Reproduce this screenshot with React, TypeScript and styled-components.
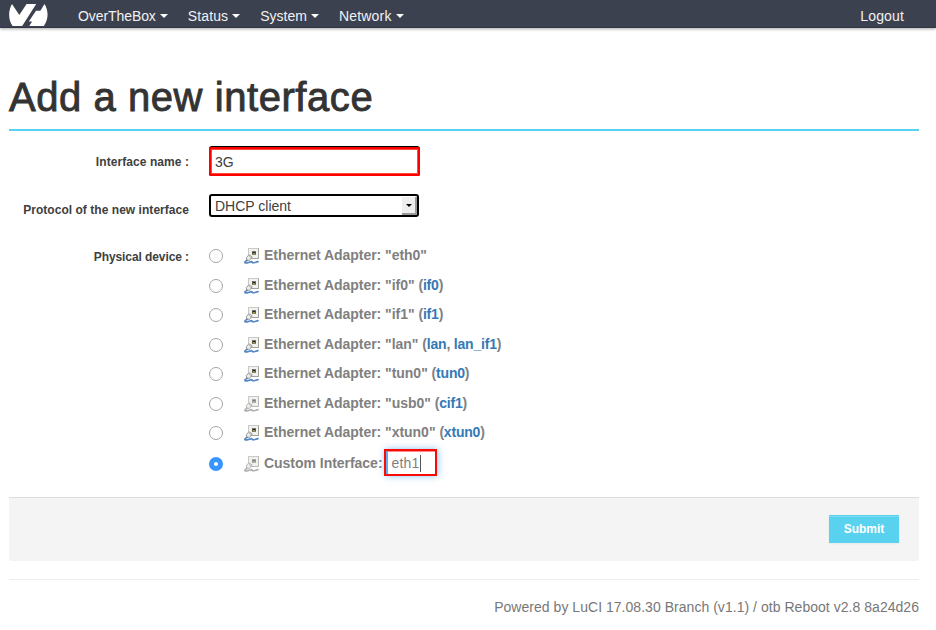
import React from 'react';
import styled, { createGlobalStyle } from 'styled-components';

const Global = createGlobalStyle`
  * { box-sizing: border-box; }
  html, body { margin: 0; background: #fff; overflow: hidden; }
  body { font: 14px/20px "Liberation Sans", Arial, sans-serif; color: #404040; }
`;

const Navbar = styled.header`
  height: 28px;
  display: flex;
  align-items: flex-start;
  background: #3c4150;
  border-bottom: 1px solid #343846;
  box-shadow: 0 1px 3px rgba(0, 0, 0, 0.35);
  padding: 0 32px 0 9px;
`;
const Logo = styled.svg`
  width: 39px;
  height: 22px;
  margin: 4px 30px 0 0;
  flex: none;
`;
const Menu = styled.nav`
  display: flex;
  flex: 1;
`;
const NavLink = styled.a<{ $spacing?: number; $gap?: number }>`
  display: flex;
  align-items: center;
  height: 32px;
  margin-right: ${p => p.$gap ?? 0}px;
  color: #f1f1f3;
  letter-spacing: ${p => p.$spacing ?? 0}px;
  white-space: nowrap;
`;
const Caret = styled.span`
  margin-left: 4px;
  border: 4px solid transparent;
  border-top-color: #fff;
  border-bottom: 0;
`;
const Page = styled.main`
  margin: 0 17px 0 9px;
`;
const Title = styled.h1`
  height: 103px;
  margin: 0;
  padding-top: 49px;
  border-bottom: 2px solid #59d2ef;
  font-size: 40px;
  line-height: 40px;
  font-weight: 400;
  color: #333;
  letter-spacing: 0.56px;
  -webkit-text-stroke: 0.9px #333;
  white-space: nowrap;
`;
const Form = styled.form`
  height: 366px;
  padding-top: 15px;
`;
const Field = styled.div<{ $height: number }>`
  display: grid;
  grid-template-columns: 180px 1fr;
  column-gap: 20px;
  align-items: start;
  height: ${p => p.$height}px;
`;
const Label = styled.label<{ $top: number; $spacing: number }>`
  padding-top: ${p => p.$top}px;
  font-size: 12px;
  line-height: 20px;
  font-weight: 700;
  text-align: right;
  letter-spacing: ${p => p.$spacing}px;
  white-space: nowrap;
`;
const TopEdge = styled.div`
  width: 211px;
  padding-top: 1px;
  border-radius: 3px 3px 2px 2px;
  background: #000;
`;
const NameInput = styled.div`
  height: 29px;
  padding: 4px 4px;
  border: 2px solid #f00;
  border-radius: 2px;
  background: #fff;
  box-shadow: inset 0 0 0 1px #ff4a3a;
  line-height: 19px;
`;
const Select = styled.div`
  display: flex;
  width: 210px;
  height: 23px;
  border: 2px solid #000;
  border-radius: 3px;
  background: #fff;
  padding: 1px 0 1px 4px;
  line-height: 19px;
`;
const SelectValue = styled.span`
  flex: 1;
`;
const SelectButton = styled.span`
  display: flex;
  align-items: center;
  justify-content: center;
  width: 15px;
  height: 18px;
  background: #eee;
  border-right: 2px solid #999;
  border-bottom: 2px solid #999;
`;
const SelectArrow = styled.span`
  border: 3px solid transparent;
  border-top: 3px solid #000;
  border-bottom: 0;
`;
const Devices = styled.div`
  display: flex;
  flex-direction: column;
  font-weight: 700;
  color: #808080;
`;
const Device = styled.div<{ $top?: number }>`
  display: flex;
  align-items: flex-start;
  height: 29.5px;
  padding-top: ${p => p.$top ?? 0}px;
  line-height: 20px;
  white-space: nowrap;
`;
const Radio = styled.span<{ $on?: boolean }>`
  flex: none;
  width: 14px;
  height: 14px;
  margin: 4px 20px 0 0;
  border-radius: 50%;
  border: ${p => (p.$on ? '5px solid #3895fb' : '1px solid #a4a4a4')};
  background: #fff;
`;
const PortIcon = styled.svg`
  flex: none;
  width: 16px;
  height: 16px;
  margin: 3px 4px 0 1px;
`;
const DeviceName = styled.span`
  letter-spacing: -0.03px;
`;
const Networks = styled.span`
  letter-spacing: -0.2px;
`;
const Network = styled.a`
  color: #337ab7;
`;
const CustomInput = styled.div`
  display: flex;
  align-items: center;
  width: 53px;
  height: 27px;
  margin: -4px 0 0 1px;
  padding: 2px 0 0 6px;
  border: 2px solid #fa0a05;
  background: #fff;
  box-shadow: inset 2px 0 0 #62aef2, inset 0 1px 0 #ff8a80, 1px 0 7px rgba(82, 168, 236, 0.65);
  font-weight: 400;
  letter-spacing: 0.2px;
`;
const Cursor = styled.span`
  width: 1px;
  height: 17px;
  background: #555;
`;
const Actions = styled.div`
  display: flex;
  justify-content: flex-end;
  height: 64px;
  padding: 17px 20px 0;
  border-top: 1px solid #dcdcdc;
  border-radius: 0 0 3px 3px;
  background: #f4f4f4;
`;
const Submit = styled.button`
  width: 70px;
  height: 28px;
  padding: 0;
  border: 0;
  background: #59d2ef;
  box-shadow: inset 0 1px 0 #59d2ef, inset 0 2px 0 #7adbf2, 0 1px 2px rgba(0, 0, 0, 0.05);
  color: #fff;
  font: 700 12px/28px "Liberation Sans", Arial, sans-serif;
`;
const Footer = styled.footer`
  margin-top: 18px;
  padding-top: 17px;
  border-top: 1px solid #eee;
  color: #777;
  letter-spacing: 0.035px;
  text-align: right;
  white-space: nowrap;
`;

function Port({ active }: { active: boolean }) {
  const cable = active ? '#5585c4' : '#b0b0b0';
  return (
    <PortIcon viewBox="0 0 16 16">
      <rect x="4.5" y="0.5" width="10" height="10" fill="#f1f1ee" stroke="#c9cac6" />
      <path d="M14.5 .5v10H6" fill="none" stroke={active ? '#a0a29e' : '#b8b8b8'} />
      <path d="M8 3.2h4v3.6H8z" fill={active ? '#55574f' : '#999'} />
      <path d="M9 4h2v1H9z" fill={active ? '#222' : '#777'} />
      <path d="M9 5.3h2v1H9z" fill={active ? '#c9ad2a' : '#b5b5b5'} />
      <path d="M2.3 9.8l2.5-3 3.4 2-2.6 3.6-3-.3z" fill="#ededea" stroke={active ? '#929490' : '#b0b0b0'} strokeWidth=".9" />
      <path d="M4.8 7.8l2.2 2" stroke="#aaa" strokeWidth=".8" />
      <path d="M3 12.4C1 13.2.2 14.8 1.5 15c2 .2 4.5-1.3 6-1.4 1.2 0 .2 1.3 1.6 1.2 1.6-.1 3-.8 4.9-1.2" fill="none" stroke={cable} strokeWidth="1.6" strokeLinecap="round" />
    </PortIcon>
  );
}

const menus = [
  { label: 'OverTheBox', spacing: -0.08, gap: 20 },
  { label: 'Status', spacing: 0.12, gap: 20 },
  { label: 'System', spacing: 0, gap: 20 },
  { label: 'Network', spacing: 0.2, gap: 0 },
];
const devices: { name: string; networks: string[]; active: boolean }[] = [
  { name: 'eth0', networks: [], active: true },
  { name: 'if0', networks: ['if0'], active: true },
  { name: 'if1', networks: ['if1'], active: true },
  { name: 'lan', networks: ['lan', 'lan_if1'], active: true },
  { name: 'tun0', networks: ['tun0'], active: true },
  { name: 'usb0', networks: ['cif1'], active: false },
  { name: 'xtun0', networks: ['xtun0'], active: true },
];

export default function App() {
  return (
    <>
      <Global />
      <Navbar>
        <Logo viewBox="0 0 39 22" fill="#fff">
          <path d="M3 0L10.3 11 17.6 0H27.2L13.2 22H3.6C-.8 15.5-1 7 3 0z" />
          <path d="M35.5 0C39.8 7 39.6 15.5 34.8 22H20.3l2.8-4.6h-3.3L27 6.8h4.4z" />
        </Logo>
        <Menu>
          {menus.map(m => (
            <NavLink key={m.label} $spacing={m.spacing} $gap={m.gap}>{m.label}<Caret /></NavLink>
          ))}
        </Menu>
        <NavLink $spacing={0.15}>Logout</NavLink>
      </Navbar>
      <Page>
        <Title>Add a new interface</Title>
        <Form>
          <Field $height={48}>
            <Label $top={6} $spacing={0.07}>Interface name :</Label>
            <TopEdge><NameInput>3G</NameInput></TopEdge>
          </Field>
          <Field $height={51}>
            <Label $top={6} $spacing={0.04}>Protocol of the new interface</Label>
            <Select>
              <SelectValue>DHCP client</SelectValue>
              <SelectButton><SelectArrow /></SelectButton>
            </Select>
          </Field>
          <Field $height={240}>
            <Label $top={2} $spacing={-0.09}>Physical device :</Label>
            <Devices>
              {devices.map(d => (
                <Device key={d.name}>
                  <Radio />
                  <Port active={d.active} />
                  <DeviceName>
                    Ethernet Adapter: "{d.name}"{' '}
                    {d.networks.length > 0 && (
                      <Networks>
                        (
                        {d.networks.map((n, i) => (
                          <React.Fragment key={n}>{i > 0 && ', '}<Network>{n}</Network></React.Fragment>
                        ))}
                        )
                      </Networks>
                    )}
                  </DeviceName>
                </Device>
              ))}
              <Device $top={1}>
                <Radio $on />
                <Port active={false} />
                <DeviceName>Custom Interface:</DeviceName>
                <CustomInput>eth1<Cursor /></CustomInput>
              </Device>
            </Devices>
          </Field>
        </Form>
        <Actions><Submit type="button">Submit</Submit></Actions>
        <Footer>Powered by LuCI 17.08.30 Branch (v1.1) / otb Reboot v2.8 8a24d26</Footer>
      </Page>
    </>
  );
}
